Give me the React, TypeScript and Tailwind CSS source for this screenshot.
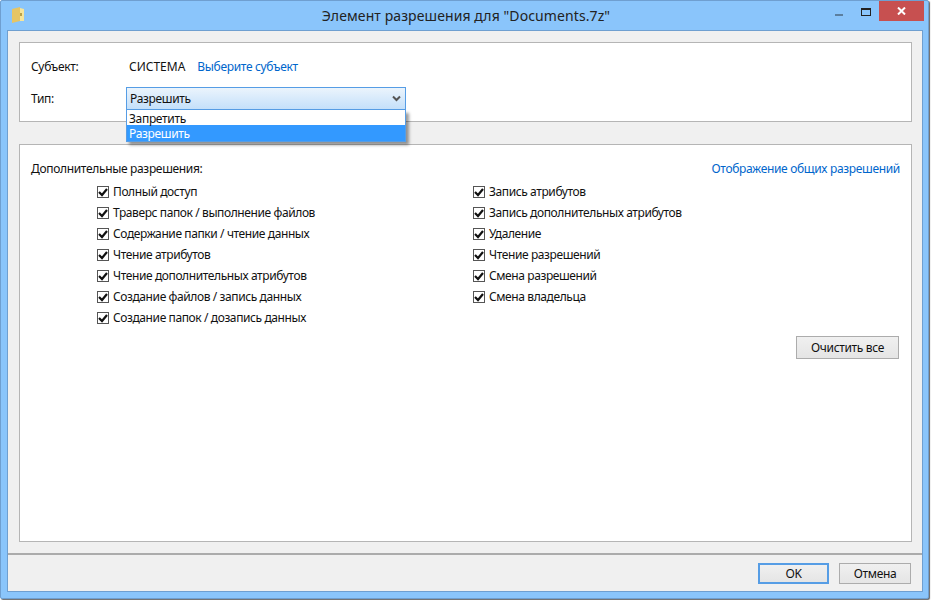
import React from "react";

const left = [
  "Полный доступ",
  "Траверс папок / выполнение файлов",
  "Содержание папки / чтение данных",
  "Чтение атрибутов",
  "Чтение дополнительных атрибутов",
  "Создание файлов / запись данных",
  "Создание папок / дозапись данных",
];
const right = [
  "Запись атрибутов",
  "Запись дополнительных атрибутов",
  "Удаление",
  "Чтение разрешений",
  "Смена разрешений",
  "Смена владельца",
];

function Check({ label }: { label: string }) {
  return (
    <div className="flex h-[21px] items-center gap-[4px]">
      <span className="flex h-[12px] w-[12px] items-center justify-center border border-[#555] bg-white">
        <svg width="10" height="10" viewBox="0 0 10 10">
          <path d="M1 5 L4 8 L9 2" fill="none" stroke="#111" strokeWidth="2.2" />
        </svg>
      </span>
      <span className="tracking-[-0.4px]">{label}</span>
    </div>
  );
}

function Folder() {
  return (
    <svg width="14" height="18" viewBox="0 0 14 18">
      <path d="M1 3 L9 1 L9 15 L1 17 Z" fill="#e6c565" />
      <path d="M9 2 L13 3 L13 15 L9 15 Z" fill="#f7e59a" />
      <path d="M9 7 h2 v3 h-2 z" fill="#b9a14a" />
    </svg>
  );
}

export default function App() {
  return (
    <div
      className="h-[600px] w-[931px] overflow-hidden bg-white text-[12px] leading-[16px] tracking-[-0.33px] text-[#111]"
      style={{ fontFamily: '"Noto Sans", "Open Sans", sans-serif' }}
    >
      <div className="flex h-[599px] w-[929px] flex-col rounded-[2px] border border-[#6f9fd0] bg-[#8ac5fb] pb-[6px] pl-[6px] pr-[5px] shadow-[1px_1px_1px_#666]">
        <div className="relative flex h-[29px] shrink-0 items-center justify-center">
          <div className="absolute left-[4px] top-[5px]">
            <Folder />
          </div>
          <span className="ml-[2px] text-[14px] tracking-[0.1px] text-[#222]">
            Элемент разрешения для "Documents.7z"
          </span>
          <div className="absolute right-[-1px] top-0 flex h-[20px] items-center">
            <span className="mr-[18px] mt-[7px] h-[2px] w-[8px] bg-[#5b7f9f]" />
            <span className="mr-[8px] mt-[2px] h-[8px] w-[10px] border border-t-2 border-[#222]" />
            <span className="flex h-[20px] w-[45px] items-center justify-center bg-[#c75050] text-white">
              <svg width="9" height="8" viewBox="0 0 9 8">
                <path d="M1 0.5 L8 7.5 M8 0.5 L1 7.5" stroke="#fff" strokeWidth="2" />
              </svg>
            </span>
          </div>
        </div>

        <div className="flex min-h-0 flex-1 flex-col border border-[#6f9fd0] bg-[#f0f0f0]">
          <div className="flex flex-1 flex-col pl-[11px] pr-[10px] pt-[11px]">
            <div className="relative h-[80px] shrink-0 border border-[#b5b5b5] bg-white px-[11px] pt-[16px]">
              <div className="flex h-[16px] items-center">
                <span className="w-[98px]">Субъект:</span>
                <span className="tracking-normal">СИСТЕМА</span>
                <span className="ml-[12px] text-[#0066cc]">Выберите субъект</span>
              </div>
              <div className="mt-[12px] flex h-[23px] items-center">
                <span className="w-[95px] pt-[1px]">Тип:</span>
                <div className="flex h-[23px] w-[280px] items-center justify-between border border-[#569de5] bg-gradient-to-b from-[#ebf4fc] to-[#c4e0fa] pl-[3px] pr-[4px]">
                  <span className="pt-[1px]">Разрешить</span>
                  <svg width="9" height="7" viewBox="0 0 9 7">
                    <path d="M1 1.5 L4.5 5 L8 1.5" fill="none" stroke="#555" strokeWidth="2" />
                  </svg>
                </div>
              </div>
              <div className="absolute left-[106px] top-[67px] z-10 w-[280px] border-x border-b border-[#569de5] bg-white shadow-[3px_3px_3px_rgba(0,0,0,0.4)]">
                <div className="h-[15px] pl-[2px] leading-[18px]">Запретить</div>
                <div className="h-[16px] bg-[#3399ff] pl-[2px] leading-[17px] text-white">Разрешить</div>
              </div>
            </div>

            <div className="mt-[22px] flex flex-1 flex-col border border-[#b5b5b5] bg-white pl-[11px] pr-[11px] pt-[16px]">
              <div className="flex h-[16px] items-center justify-between">
                <span>Дополнительные разрешения:</span>
                <span className="text-[#0066cc]">Отображение общих разрешений</span>
              </div>
              <div className="mt-[4px] flex pl-[66px]">
                <div className="w-[376px]">
                  {left.map((l) => (
                    <Check key={l} label={l} />
                  ))}
                </div>
                <div>
                  {right.map((l) => (
                    <Check key={l} label={l} />
                  ))}
                </div>
              </div>
              <div className="mt-[8px] flex justify-end">
                <button className="mr-[1px] h-[23px] w-[103px] border border-[#acacac] bg-gradient-to-b from-[#f0f0f0] to-[#e5e5e5]">
                  Очистить все
                </button>
              </div>
            </div>
          </div>

          <div className="mt-[11px] flex h-[38px] shrink-0 items-start justify-end gap-[10px] border-t-2 border-[#ababab] pr-[11px] pt-[8px]">
            <button className="h-[21px] w-[71px] border-2 border-[#569de5] bg-gradient-to-b from-[#f0f0f0] to-[#e5e5e5]">
              OK
            </button>
            <button className="h-[21px] w-[72px] border border-[#acacac] bg-gradient-to-b from-[#f0f0f0] to-[#e5e5e5]">
              Отмена
            </button>
          </div>
        </div>
      </div>
    </div>
  );
}
